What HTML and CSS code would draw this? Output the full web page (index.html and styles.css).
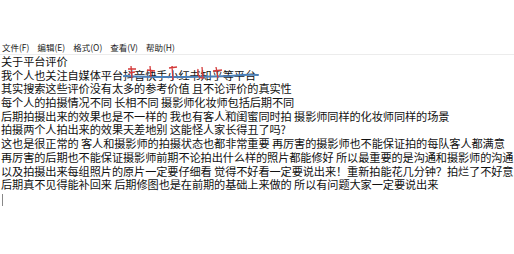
FILE: index.html
```html
<!DOCTYPE html>
<html lang="zh">
<head>
<meta charset="utf-8">
<link rel="stylesheet" href="styles.css">
</head>
<body>
<div class="window">
  <div class="menubar">
    <span class="menu">文件(F)</span>
    <span class="menu">编辑(E)</span>
    <span class="menu">格式(O)</span>
    <span class="menu">查看(V)</span>
    <span class="menu">帮助(H)</span>
  </div>
  <div class="editor">
    <div class="line">关于平台评价</div>
    <div class="line">我个人也关注自媒体平台抖音快手小红书知乎等平台</div>
    <div class="line">其实搜索这些评价没有太多的参考价值 且不论评价的真实性</div>
    <div class="line">每个人的拍摄情况不同 长相不同 摄影师化妆师包括后期不同</div>
    <div class="line">后期拍摄出来的效果也是不一样的 我也有客人和闺蜜同时拍 摄影师同样的化妆师同样的场景</div>
    <div class="line">拍摄两个人拍出来的效果天差地别 这能怪人家长得丑了吗?</div>
    <div class="line">这也是很正常的 客人和摄影师的拍摄状态也都非常重要 再厉害的摄影师也不能保证拍的每队客人都满意</div>
    <div class="line">再厉害的后期也不能保证摄影师前期不论拍出什么样的照片都能修好 所以最重要的是沟通和摄影师的沟通</div>
    <div class="line">以及拍摄出来每组照片的原片一定要仔细看 觉得不好看一定要说出来！重新拍能花几分钟？拍烂了不好意思说</div>
    <div class="line">后期真不见得能补回来 后期修图也是在前期的基础上来做的 所以有问题大家一定要说出来</div>
    <div class="line"><span class="caret"></span></div>
    <svg class="ink" width="514" height="120" viewBox="0 0 514 120">
      <path d="M124 21 C160 23 200 22 230 21 C240 20 250 19 258 20" stroke="#4a7fb8" stroke-width="2" fill="none" stroke-linecap="round"/>
      <path d="M131 11 L132 23 M128 14 L136 14 M129 18 L135 17" stroke="#d43a3a" stroke-width="1.3" fill="none"/>
      <path d="M150 11 L151 22 M147 15 L155 16" stroke="#d43a3a" stroke-width="1.3" fill="none"/>
      <path d="M172 11 L173 25 M169 13 L177 12" stroke="#d43a3a" stroke-width="1.3" fill="none"/>
      <path d="M198 14 C197 19 199 23 202 23 M202 12 L203 24" stroke="#d43a3a" stroke-width="1.3" fill="none"/>
      <path d="M216 12 L218 23 M213 16 L222 15" stroke="#d43a3a" stroke-width="1.3" fill="none"/>
      <path d="M225 55 L235 60 M233 56 L240 62 M244 56 L246 62 M250 57 L255 61" stroke="#888" stroke-width="1" fill="none"/>
    </svg>
  </div>
</div>
</body>
</html>
```
FILE: styles.css
```css
html, body {
  margin: 0;
  padding: 0;
  background: #ffffff;
}
.window {
  width: 514px;
  height: 254px;
  background: #ffffff;
  padding-top: 41px;
  box-sizing: border-box;
}
.menubar {
  display: flex;
  gap: 8px;
  padding: 0 0 0 2px;
  height: 13px;
  border-bottom: 1px solid #ececec;
  font-family: "Noto Sans CJK SC", sans-serif;
  font-size: 8.5px;
  line-height: 13px;
  color: #222;
}
.editor {
  position: relative;
  padding: 0 0 0 1px;
  font-family: "Noto Sans CJK SC", "Noto Sans", sans-serif;
  font-size: 11.2px;
  line-height: 13.7px;
  color: #111;
  letter-spacing: -0.1px;
}
.line {
  white-space: nowrap;
  height: 13.7px;
}
.caret {
  display: inline-block;
  width: 1px;
  height: 12px;
  background: #888;
  vertical-align: middle;
  margin-left: 1px;
}
.ink {
  position: absolute;
  left: 0;
  top: 0;
  pointer-events: none;
}
```
